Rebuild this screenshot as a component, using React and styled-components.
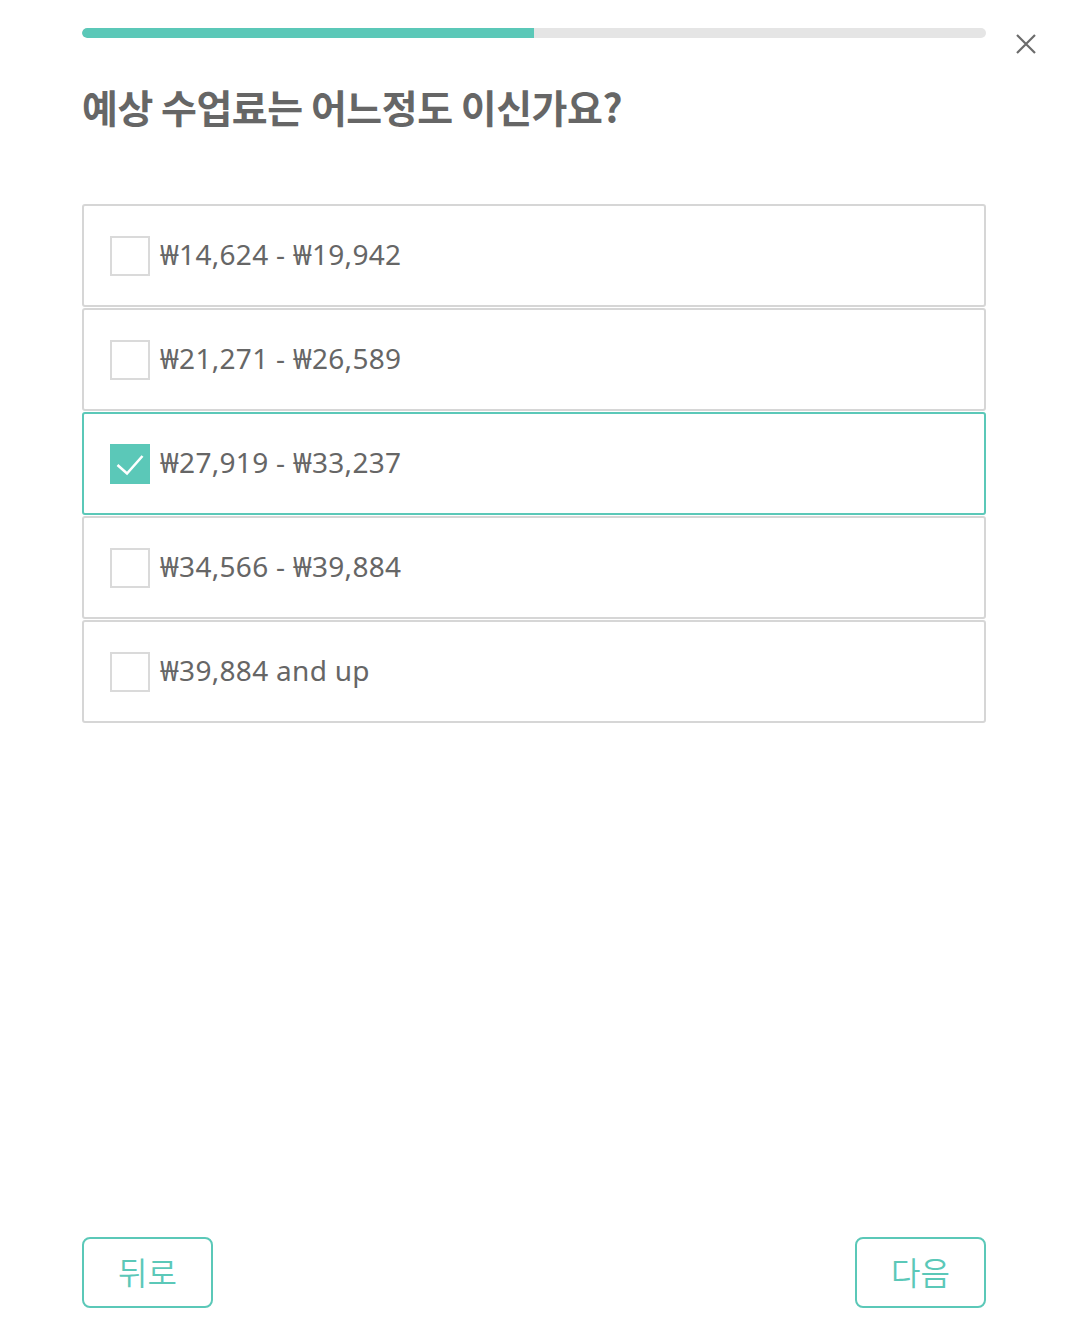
import React, { useState } from "react";
import styled, { createGlobalStyle } from "styled-components";

const GlobalStyle = createGlobalStyle`
  html, body {
    margin: 0;
    padding: 0;
    background: #ffffff;
  }
  body {
    font-family: "Noto Sans CJK KR", "Noto Sans", sans-serif;
  }
  * { box-sizing: border-box; }
`;

const options = [
  "₩14,624 - ₩19,942",
  "₩21,271 - ₩26,589",
  "₩27,919 - ₩33,237",
  "₩34,566 - ₩39,884",
  "₩39,884 and up",
];

export default function App() {
  const [selected, setSelected] = useState(2);

  return (
    <Page>
      <GlobalStyle />
      <CloseButton aria-label="close">
        <svg width="22" height="22" viewBox="0 0 22 22">
          <path d="M2 2 L20 20 M20 2 L2 20" stroke="#6b6b6b" strokeWidth="2.2" fill="none" />
        </svg>
      </CloseButton>
      <Content>
        <Progress>
          <ProgressFill style={{ width: "50%" }} />
        </Progress>
        <Title>예상 수업료는 어느정도 이신가요?</Title>
        <OptionList>
          {options.map((label, i) => (
            <Option key={label} $active={selected === i} onClick={() => setSelected(i)}>
              <Checkbox $checked={selected === i}>
                {selected === i && (
                  <svg width="36" height="36" viewBox="0 0 36 36">
                    <path d="M5.5 19 L15 27.5 L30.5 10" stroke="#ffffff" strokeWidth="2.6" fill="none" />
                  </svg>
                )}
              </Checkbox>
              <OptionLabel>{label}</OptionLabel>
            </Option>
          ))}
        </OptionList>
        <Footer>
          <NavButton>뒤로</NavButton>
          <NavButton>다음</NavButton>
        </Footer>
      </Content>
    </Page>
  );
}

const Page = styled.div`
  position: relative;
  width: 100%;
  min-height: 1342px;
  display: flex;
  justify-content: center;
`;

const CloseButton = styled.button`
  position: absolute;
  top: 33px;
  right: 33px;
  width: 22px;
  height: 22px;
  padding: 0;
  border: none;
  background: none;
  display: flex;
  cursor: pointer;
`;

const Content = styled.div`
  width: 904px;
  min-height: 1342px;
  padding: 28px 0 34px;
  margin-right: 2px;
  display: flex;
  flex-direction: column;
`;

const Progress = styled.div`
  width: 100%;
  height: 10px;
  border-radius: 5px;
  background: #e5e5e5;
  overflow: hidden;
`;

const ProgressFill = styled.div`
  height: 100%;
  background: #5bc8b8;
  border-radius: 5px 0 0 5px;
`;

const Title = styled.h1`
  margin: 43px 0 0;
  font-size: 39px;
  line-height: 50px;
  font-weight: 700;
  color: #666666;
  letter-spacing: -0.5px;
`;

const OptionList = styled.div`
  margin-top: 73px;
  display: flex;
  flex-direction: column;
  gap: 1px;
`;

const Option = styled.div`
  height: 103px;
  border: 2px solid ${(p) => (p.$active ? "#5bc8b8" : "#d6d6d6")};
  border-radius: 3px;
  display: flex;
  align-items: center;
  padding-left: 26px;
  cursor: pointer;
`;

const Checkbox = styled.div`
  width: 40px;
  height: 40px;
  border: 2px solid ${(p) => (p.$checked ? "#5bc8b8" : "#dadada")};
  background: ${(p) => (p.$checked ? "#5bc8b8" : "#ffffff")};
  display: flex;
  align-items: center;
  justify-content: center;
  flex-shrink: 0;
`;

const OptionLabel = styled.span`
  margin-left: 10px;
  padding-bottom: 4px;
  font-family: "Noto Sans", "Noto Sans CJK KR", sans-serif;
  font-size: 28px;
  color: #666666;
  line-height: 1;
  letter-spacing: 0.3px;
`;

const Footer = styled.div`
  margin-top: auto;
  display: flex;
  justify-content: space-between;
`;

const NavButton = styled.button`
  width: 131px;
  height: 71px;
  padding: 0 0 4px;
  border: 2px solid #5bc8b8;
  border-radius: 8px;
  background: #ffffff;
  color: #5bc8b8;
  font-family: "Noto Sans CJK KR", "Noto Sans", sans-serif;
  font-size: 32px;
  font-weight: 350;
  line-height: 1;
  cursor: pointer;
`;
